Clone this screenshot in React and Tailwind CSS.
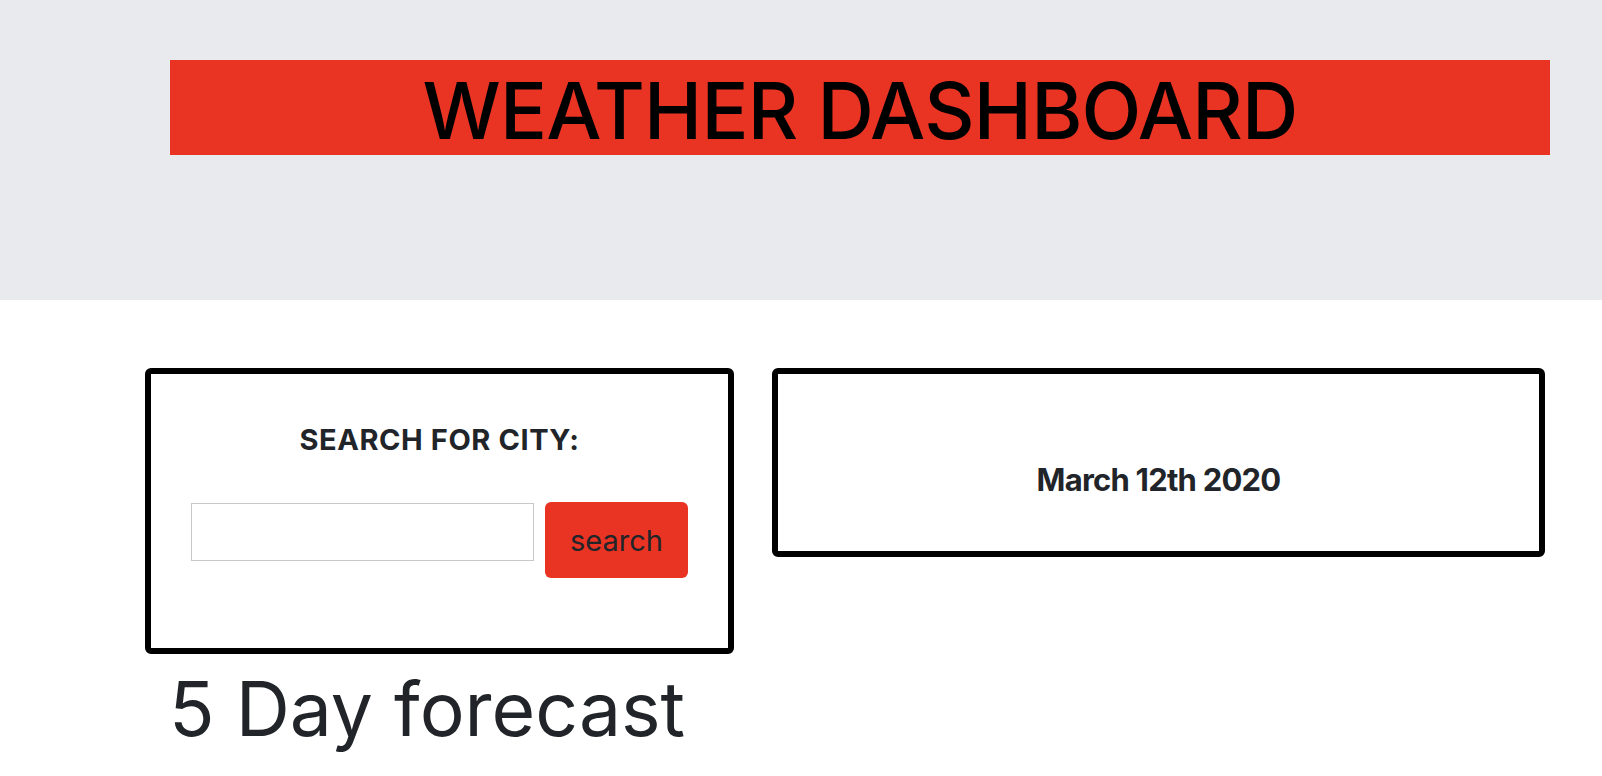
import React from "react";

const font = { fontFamily: "Inter, 'Noto Sans', sans-serif" };

export default function App() {
  return (
    <div className="min-h-screen bg-white text-[#212529]" style={font}>
      {/* HEADER */}
      <header className="h-[300px] bg-[#e9eaee] pt-[60px]">
        <div className="ml-[170px] w-[1380px] h-[95px] bg-[#e93323] flex items-center justify-center pt-[7px]">
          <h1 className="text-[78px] leading-none font-medium tracking-[-0.01em] text-black">
            WEATHER DASHBOARD
          </h1>
        </div>
      </header>

      {/* MAIN */}
      <main className="pt-[68px]">
        <div className="flex items-start ml-[145px] gap-[38px]">
          {/* SEARCH CARD */}
          <div className="w-[589px] h-[286px] border-[6px] border-black rounded-md flex flex-col items-center pt-[51px]">
            <h4 className="text-[29px] leading-none font-bold tracking-[0.02em]">
              SEARCH FOR CITY:
            </h4>
            <div className="flex items-start gap-[11px] mt-[48px]">
              <input
                type="text"
                className="w-[343px] h-[58px] mt-[1px] border border-[#c8c8c8] bg-white outline-none px-2"
              />
              <button className="w-[143px] h-[76px] rounded-md bg-[#e93323] text-[29px] leading-none text-[#212529] flex items-center justify-center">
                search
              </button>
            </div>
          </div>

          {/* DATE CARD */}
          <div className="w-[773px] h-[189px] border-[6px] border-black rounded-md flex justify-center pt-[90px]">
            <h4 className="text-[31px] leading-none font-bold tracking-tight">
              March 12th 2020
            </h4>
          </div>
        </div>

        <h2 className="ml-[169px] mt-[17px] text-[75px] leading-none font-normal">
          5 Day forecast
        </h2>
      </main>
    </div>
  );
}
